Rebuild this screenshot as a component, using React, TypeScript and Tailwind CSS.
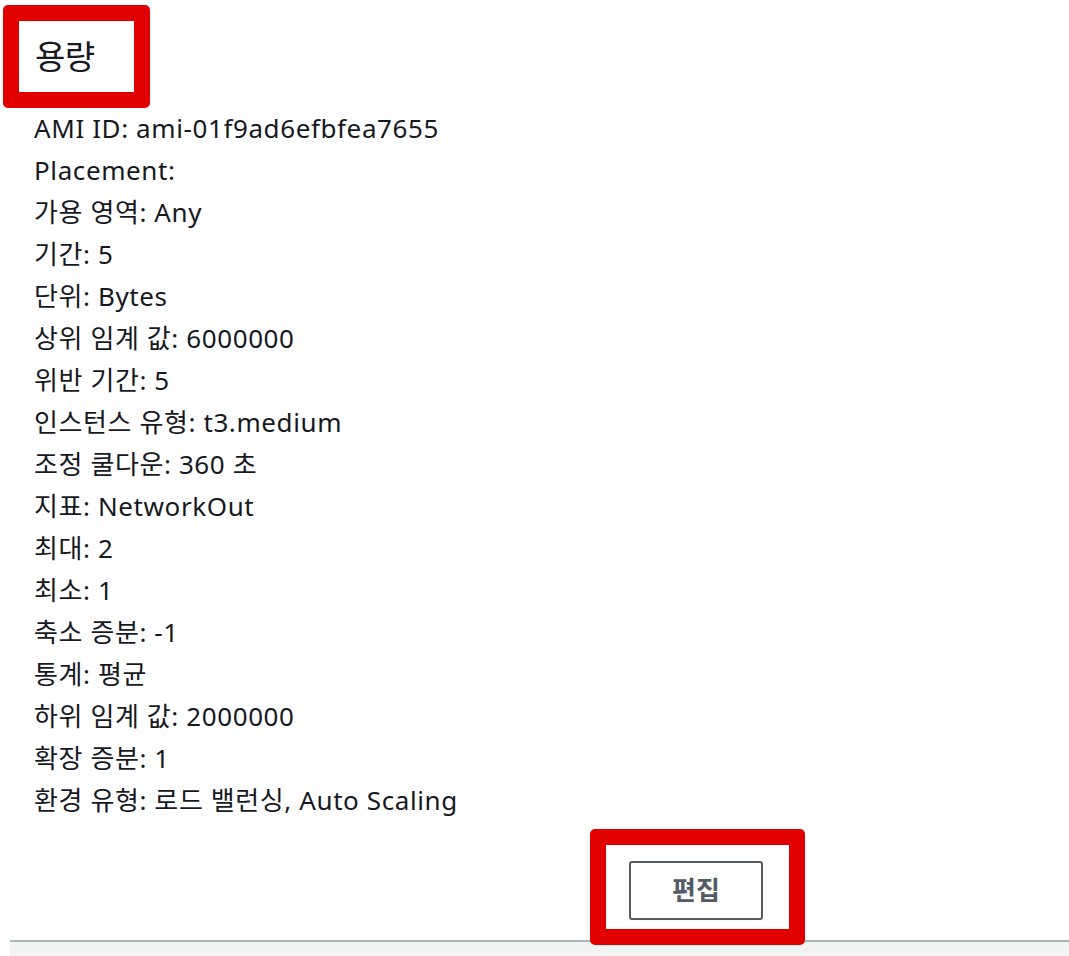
const rows: string[] = [
  "AMI ID: ami-01f9ad6efbfea7655",
  "Placement:",
  "가용 영역: Any",
  "기간: 5",
  "단위: Bytes",
  "상위 임계 값: 6000000",
  "위반 기간: 5",
  "인스턴스 유형: t3.medium",
  "조정 쿨다운: 360 초",
  "지표: NetworkOut",
  "최대: 2",
  "최소: 1",
  "축소 증분: -1",
  "통계: 평균",
  "하위 임계 값: 2000000",
  "확장 증분: 1",
  "환경 유형: 로드 밸런싱, Auto Scaling",
];

export default function App() {
  return (
    <div
      className="w-[1069px] h-[956px] bg-white overflow-hidden text-[#16191f]"
      style={{ fontFamily: '"Noto Sans", "Noto Sans CJK KR", sans-serif' }}
    >
      <div className="pl-[3px] pt-[5px]">
        <div className="w-[147px] h-[103px] border-[16px] border-[#e00000] rounded-[5px] flex items-center pl-[16px]">
          <h2 className="text-[33px] leading-none font-normal tracking-[-0.5px]">용량</h2>
        </div>
      </div>

      <ul className="pl-[34px] mt-[-1px]">
        {rows.map((r) => (
          <li key={r} className="text-[26px] leading-[42px] tracking-[0.6px]">
            {r}
          </li>
        ))}
      </ul>

      <div className="relative mt-[8px]">
        <div className="ml-[590px] w-[215px] h-[116px] border-[16px] border-[#e00000] rounded-[5px] pt-[16px] pl-[23px] relative z-10">
          <button className="w-[134px] h-[59px] border-2 border-[#545b64] rounded-[3px] bg-white text-[26px] font-bold text-[#545b64]">
            편집
          </button>
        </div>
        <div className="absolute left-[10px] right-0 top-[111px] h-[40px] border-t-2 border-[#aab7b8] bg-[#f2f3f3]" />
      </div>
    </div>
  );
}
